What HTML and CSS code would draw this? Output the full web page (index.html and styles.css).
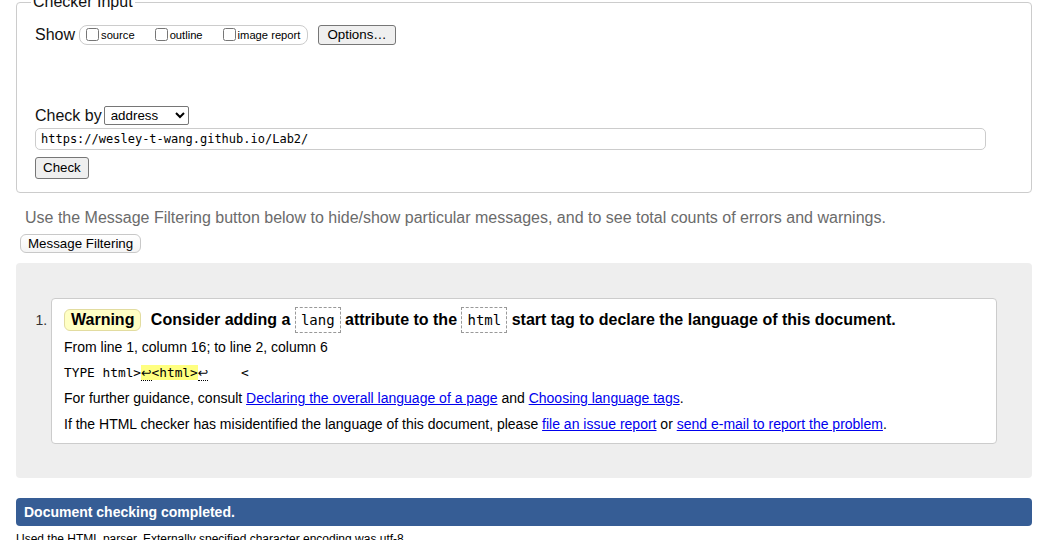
FILE: index.html
```html
<!DOCTYPE html>
<html lang="en">
<head>
<meta charset="utf-8">
<title>Nu Html Checker</title>
<link rel="stylesheet" href="styles.css">
</head>
<body>
<div class="page">
  <fieldset class="checker">
    <legend>Checker Input</legend>
    <div class="show-row">
      <span class="lbl">Show</span>
      <span class="show-opts">
        <label class="opt"><input type="checkbox">source</label>
        <label class="opt"><input type="checkbox">outline</label>
        <label class="opt"><input type="checkbox">image report</label>
      </span>
      <button class="btn options" type="button">Options…</button>
    </div>
    <div class="checkby-row">
      <span class="lbl lbl-by">Check by</span>
      <select class="by-select"><option>address</option></select>
    </div>
    <input class="url" type="text" value="https://wesley-t-wang.github.io/Lab2/">
    <button class="btn check" type="button">Check</button>
  </fieldset>

  <p class="hint">Use the Message Filtering button below to hide/show particular messages, and to see total counts of errors and warnings.</p>
  <button class="btn filter" type="button">Message Filtering</button>

  <div class="results">
    <ol class="msgs">
      <li class="msg">
        <p class="msg-title"><span class="badge">Warning</span> Consider adding a <code class="box">lang</code> attribute to the <code class="box">html</code> start tag to declare the language of this document.</p>
        <p class="loc">From line 1, column 16; to line 2, column 6</p>
        <p class="extract">TYPE html&gt;<mark class="hl"><span class="lf">↩</span>&lt;html&gt;</mark><span class="lf">↩</span><span class="tab">    </span>&lt;</p>
        <p class="para">For further guidance, consult <a href="#">Declaring the overall language of a page</a> and <a href="#">Choosing language tags</a>.</p>
        <p class="para">If the HTML checker has misidentified the language of this document, please <a href="#">file an issue report</a> or <a href="#">send e-mail to report the problem</a>.</p>
      </li>
    </ol>
  </div>

  <h2 class="done">Document checking completed.</h2>
  <p class="parser">Used the HTML parser. Externally specified character encoding was utf-8.</p>
</div>
</body>
</html>
```

FILE: styles.css
```css
html, body {
  margin: 0;
  padding: 0;
  background: #fff;
}

body {
  font-family: "Liberation Sans", Arial, sans-serif;
  color: #000;
}

.page {
  margin: -7px 17px 0 16px;
}

/* ---------- checker input ---------- */
.checker {
  margin: 0;
  padding: 14px 18px 13px 18px;
  border: 1px solid #ccc;
  border-radius: 4px;
  min-width: 0;
}

.checker legend {
  font-size: 16px;
  line-height: 18px;
  padding: 0 2px;
  margin-left: -4px;
  color: #111;
}

.show-row {
  display: flex;
  align-items: center;
  height: 20px;
}

.lbl {
  font-size: 16px;
  line-height: 18px;
  margin-right: 4px;
  color: #111;
}

.show-opts {
  display: flex;
  height: 18px;
  border: 1px solid #ccc;
  border-radius: 8px;
  padding: 0 7px 0 2px;
}

.opt {
  display: block;
  font-size: 11.2px;
  line-height: 18px;
  margin-right: 16px;
  white-space: nowrap;
}

.opt:last-child {
  margin-right: 0;
}

.opt input {
  width: 13px;
  height: 13px;
  margin: 0 2px 0 4px;
  vertical-align: -2px;
}

.btn {
  font-family: "Liberation Sans", Arial, sans-serif;
  font-size: 13.33px;
  color: #000;
  background: #efefef;
  border: 1px solid #767676;
  border-radius: 3px;
  margin: 0;
  line-height: 16px;
}

.options {
  margin-left: 10px;
  height: 20px;
  padding: 0 8px;
}

.checkby-row {
  display: flex;
  align-items: center;
  height: 19px;
  margin-top: 61px;
}

.lbl-by {
  margin-right: 2px;
}

.by-select {
  width: 85px;
  height: 19px;
  font-family: "Liberation Sans", Arial, sans-serif;
  font-size: 13.33px;
  padding: 0 0 0 2px;
  margin: 0;
  border: 1px solid #767676;
  border-radius: 2px;
  background: #fff;
  color: #000;
}

.url {
  display: block;
  box-sizing: border-box;
  width: 951px;
  height: 22px;
  margin: 3px 0 0 0;
  padding: 0 5px;
  border: 1px solid #ccc;
  border-radius: 5px;
  font-family: "DejaVu Sans Mono", "Liberation Mono", monospace;
  font-size: 12px;
  color: #000;
  background: #fff;
}

.check {
  display: block;
  margin-top: 7px;
  height: 22px;
  padding: 0 7px;
}

/* ---------- hint ---------- */
.hint {
  margin: 16px 0 0 9px;
  font-size: 16px;
  line-height: 18px;
  color: #6b6b6b;
}

.filter {
  display: block;
  margin: 7px 0 0 4px;
  height: 19px;
  padding: 0 7px;
  border: 1px solid #c8c8c8;
  border-radius: 6px;
  background: linear-gradient(#ffffff, #f4f4f4);
}

/* ---------- results ---------- */
.results {
  margin-top: 10px;
  padding: 35px 35px 34px 35px;
  background: #eeeeee;
  border-radius: 4px;
}

.msgs {
  margin: 0;
  padding: 0;
  list-style: decimal outside;
}

.msg {
  background: #fff;
  border: 1px solid #ccc;
  border-radius: 4px;
  padding: 7px 13px 11px 12px;
  font-size: 14px;
  color: #000;
}

.msg::marker {
  color: #333;
}

.msg p {
  margin: 0;
}

.msg-title {
  font-size: 16px;
  font-weight: bold;
  line-height: 27px;
}

.badge {
  display: inline-block;
  line-height: 18px;
  padding: 1px 6px;
  border: 1px solid #e2dca0;
  border-radius: 6px;
  background: #ffffc4;
  margin-right: 5px;
}

.box {
  font-family: "DejaVu Sans Mono", "Liberation Mono", monospace;
  font-size: 14px;
  font-weight: normal;
  padding: 4px 5px;
  border: 1px dashed #999;
}

.msg .loc {
  line-height: 16px;
  margin-top: 5px;
}

.msg .extract {
  font-family: "DejaVu Sans Mono", "Liberation Mono", monospace;
  font-size: 12.8px;
  line-height: 16px;
  white-space: pre;
  margin-top: 10px;
}

.hl {
  background: #ffff80;
  color: #000;
}

.lf {
  font-family: "DejaVu Sans", sans-serif;
  font-size: 12.5px;
  border-bottom: 1px dotted #000;
}

.tab {
  margin-right: 2px;
}

.msg .para {
  line-height: 16px;
  margin-top: 9px;
}

.msg .para + .para {
  margin-top: 10px;
}

.msg a {
  color: #0000ee;
  text-decoration: underline;
}

/* ---------- footer ---------- */
.done {
  margin: 20px 0 0 0;
  height: 28px;
  line-height: 28px;
  padding: 0 8px;
  background: #365d95;
  color: #fff;
  font-size: 14px;
  font-weight: bold;
  border-radius: 4px;
}

.parser {
  margin: 6px 0 0 0;
  font-size: 12px;
  line-height: 14px;
  color: #000;
}
```
